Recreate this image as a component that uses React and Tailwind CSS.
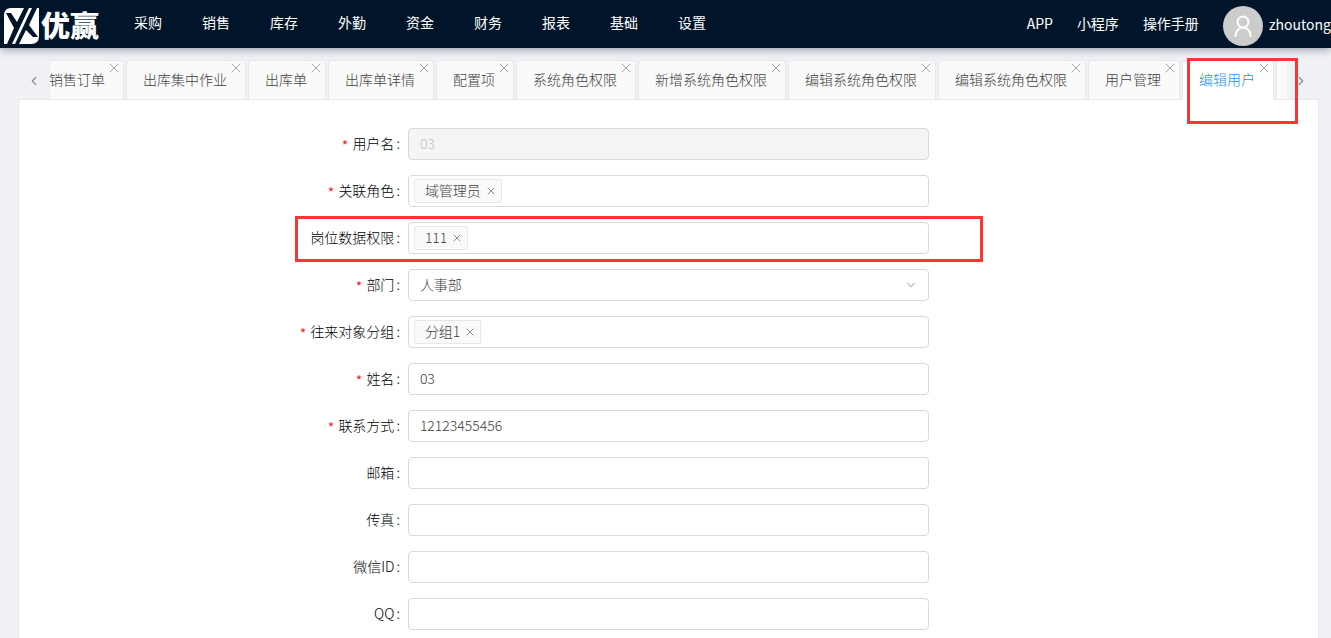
import { X, ChevronLeft, ChevronRight, ChevronDown } from "lucide-react";

const NAV_ITEMS = ["采购", "销售", "库存", "外勤", "资金", "财务", "报表", "基础", "设置"];
const HEADER_LINKS = ["APP", "小程序", "操作手册"];

const TABS = [
  "销售订单",
  "出库集中作业",
  "出库单",
  "出库单详情",
  "配置项",
  "系统角色权限",
  "新增系统角色权限",
  "编辑系统角色权限",
  "编辑系统角色权限",
  "用户管理",
  "编辑用户",
];

const FIELDS = [
  { id: "username", label: "用户名", required: true, type: "text", value: "03", disabled: true },
  { id: "roles", label: "关联角色", required: true, type: "tags", tags: ["域管理员"] },
  { id: "post", label: "岗位数据权限", type: "tags", tags: ["111"], marked: true },
  { id: "department", label: "部门", required: true, type: "select", value: "人事部" },
  { id: "group", label: "往来对象分组", required: true, type: "tags", tags: ["分组1"] },
  { id: "name", label: "姓名", required: true, type: "text", value: "03" },
  { id: "phone", label: "联系方式", required: true, type: "text", value: "12123455456" },
  { id: "email", label: "邮箱", type: "text", value: "" },
  { id: "fax", label: "传真", type: "text", value: "" },
  { id: "wechat", label: "微信ID", type: "text", value: "" },
  { id: "qq", label: "QQ", type: "text", value: "" },
];

function Logo() {
  return (
    <a href="#" className="flex w-[114px] shrink-0 items-center gap-px pl-1 text-white">
      <svg viewBox="0 0 36 36" className="mt-1 size-9 shrink-0">
        <path d="M7 0H35V28Q35 36 27 36H0V8Q0 0 7 0Z" fill="#fff" />
        <path d="M2 5H7L13 14L20 0H25L8 36H3L10 20Z" fill="#001529" />
        <path d="M28 0H33L25 17L34 29H29L22 22L15 36H11Z" fill="#001529" />
      </svg>
      <span className="text-[29px] leading-none font-black">优赢</span>
    </a>
  );
}

function Header() {
  return (
    <header className="relative z-10 flex h-12 items-center bg-[#001529] text-white shadow-[0_2px_8px_rgba(0,21,41,0.35)]">
      <Logo />
      <nav className="flex pb-1">
        {NAV_ITEMS.map((item) => (
          <a key={item} href="#" className="shrink-0 px-5">
            {item}
          </a>
        ))}
      </nav>
      <div className="ml-auto flex shrink-0 items-center gap-6">
        {HEADER_LINKS.map((item) => (
          <a key={item} href="#" className="pb-[2px]">
            {item}
          </a>
        ))}
        <button type="button" className="flex items-center gap-[6px] whitespace-nowrap">
          <span className="mt-1 flex size-10 items-center justify-center rounded-full bg-[#ccc]">
            <svg viewBox="0 0 20 24" className="h-6 w-5" fill="none" stroke="#fff" strokeWidth="2" strokeLinecap="round">
              <circle cx="10" cy="8" r="5.500" />
              <path d="M2.500 22C2.500 17 6 13.500 10 13.500S17.500 17 17.500 22" />
            </svg>
          </span>
          zhoutong
        </button>
      </div>
    </header>
  );
}

function TabBar() {
  return (
    <div className="relative flex h-10 items-stretch">
      <button type="button" aria-label="向左" className="flex w-8 shrink-0 items-center justify-center border-b border-[#e8e8e8] pt-[2px] text-[#8c8c8c]">
        <ChevronLeft size={14} />
      </button>
      <div className="min-w-0 flex-1 overflow-hidden">
        <div className="-ml-[18px] flex h-full">
          {TABS.map((tab, index) => {
            const active = index === TABS.length - 1;
            const stateClasses = active
              ? "border-b-white bg-white text-[#1890ff]"
              : "border-b-[#e8e8e8] bg-[#fafafa] text-[#404040]";

            return (
              <div key={index} className="flex shrink-0 border-b border-[#e8e8e8] pr-[2px]">
                <div className={`relative -mb-px flex items-center rounded-t border border-[#e8e8e8] pr-[18px] pb-[2px] pl-4 font-light ${stateClasses}`}>
                  <button type="button" className="whitespace-nowrap">
                    {tab}
                  </button>
                  <button type="button" aria-label={`关闭${tab}`} className="absolute -top-px right-px text-[#a6a6a6]">
                    <X size={16} strokeWidth={1.5} />
                  </button>
                </div>
              </div>
            );
          })}
          <div className="w-20 shrink-0 rounded-tl border border-[#e8e8e8] bg-[#fafafa]" />
        </div>
      </div>
      <button type="button" aria-label="向右" className="flex w-8 shrink-0 items-center justify-center border-b border-[#e8e8e8] pt-[2px] pr-1 text-[#8c8c8c]">
        <ChevronRight size={14} />
      </button>
      <div className="pointer-events-none absolute -top-[2px] right-[21px] h-[66px] w-[111px] border-3 border-[#fa3535]" />
    </div>
  );
}

function Tag({ children }) {
  return (
    <span className="flex h-6 shrink-0 items-center gap-1 rounded-xs border border-[#e8e8e8] bg-[#fafafa] pr-1 pl-[10px]">
      <span className="pb-[2px]">{children}</span>
      <button type="button" aria-label={`移除${children}`} className="text-[#8c8c8c]">
        <X size={12} />
      </button>
    </span>
  );
}

function Control({ field }) {
  if (field.type === "tags") {
    return (
      <div className="flex h-8 items-center rounded border border-[#d9d9d9] bg-white px-[5px]">
        {field.tags.map((tag) => (
          <Tag key={tag}>{tag}</Tag>
        ))}
        <input id={field.id} className="min-w-0 flex-1 outline-none" />
      </div>
    );
  }

  if (field.type === "select") {
    return (
      <div className="relative">
        <select id={field.id} defaultValue={field.value} className="block h-8 w-full appearance-none rounded border border-[#d9d9d9] bg-white px-[11px] pb-[2px] outline-none">
          <option>{field.value}</option>
        </select>
        <ChevronDown size={14} strokeWidth={2} className="pointer-events-none absolute top-[9px] right-[11px] text-[#bfbfbf]" />
      </div>
    );
  }

  return (
    <input
      id={field.id}
      type="text"
      defaultValue={field.value}
      disabled={field.disabled}
      className="block h-8 w-full rounded border border-[#d9d9d9] bg-white px-[11px] pb-[2px] outline-none disabled:bg-[#f5f5f5] disabled:text-[#bfbfbf]"
    />
  );
}

function FormRow({ field }) {
  return (
    <div className="relative grid grid-cols-24 items-center">
      <label htmlFor={field.id} className="col-span-7 flex items-center justify-end pr-2 pb-[2px] whitespace-nowrap text-black">
        {field.required && <span className="mr-1 pt-1 font-normal text-[#f5222d]">*</span>}
        {field.label}
        <span className="ml-[2px]">:</span>
      </label>
      <div className="col-span-10 text-[#404040]">
        <Control field={field} />
      </div>
      {field.marked && (
        <div className="pointer-events-none absolute -top-[6px] left-[252px] h-[46px] w-[688px] border-3 border-[#fa3535]" />
      )}
    </div>
  );
}

export default function App() {
  return (
    <div className="flex min-h-screen flex-col overflow-hidden bg-[#f0f1f5] font-['Noto_Sans_CJK_SC',sans-serif] text-sm">
      <Header />
      <main className="flex flex-1 flex-col pt-3 pr-3 pl-[18px]">
        <TabBar />
        <form className="flex flex-1 flex-col gap-[15px] border-x border-[#e8e8e8] bg-white px-6 pt-7 pb-2 font-light">
          {FIELDS.map((field) => (
            <FormRow key={field.id} field={field} />
          ))}
        </form>
      </main>
    </div>
  );
}
